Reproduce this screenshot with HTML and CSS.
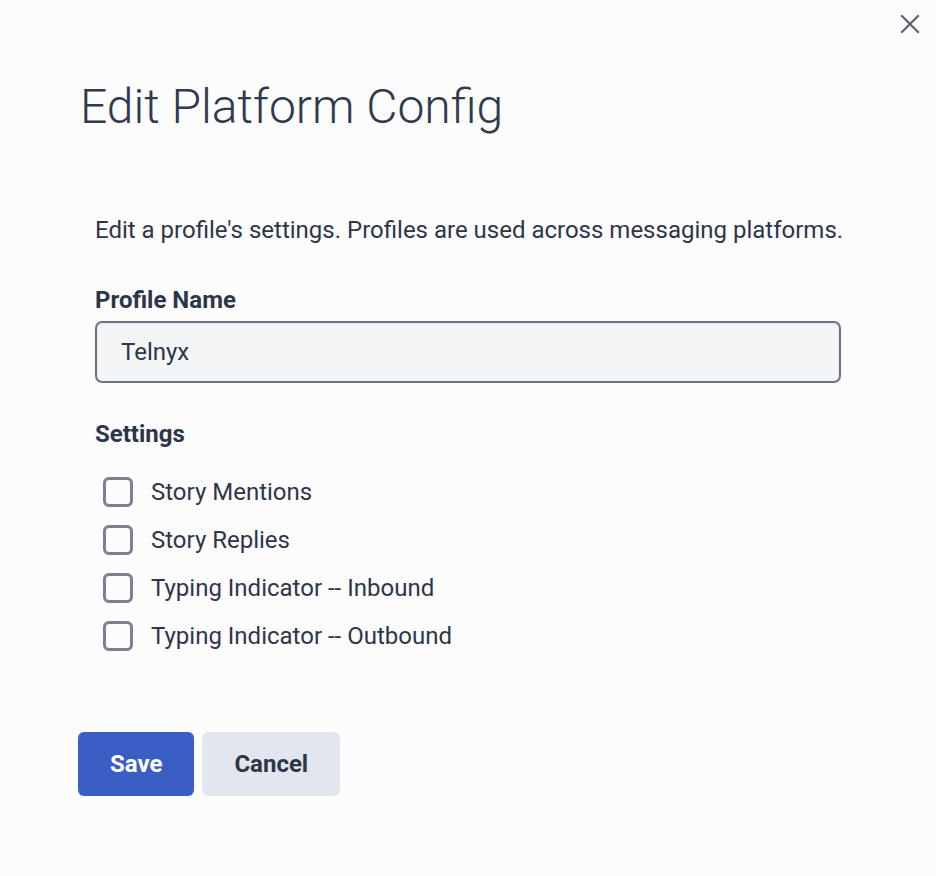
FILE: index.html
```html
<!DOCTYPE html>
<html lang="en">
<head>
<meta charset="utf-8">
<title>Edit Platform Config</title>
<link rel="stylesheet" href="styles.css">
</head>
<body>
<div class="dialog">
  <button class="close" aria-label="Close">
    <svg width="20" height="20" viewBox="0 0 20 20"><path d="M2 2 L18 18 M18 2 L2 18" stroke="#5b6374" stroke-width="2.2" stroke-linecap="square" fill="none"/></svg>
  </button>
  <h1 class="title">Edit Platform Config</h1>
  <div class="form">
    <p class="desc">Edit a profile's settings. Profiles are used across messaging platforms.</p>
    <label class="label" for="pname">Profile Name</label>
    <input class="input" id="pname" type="text" value="Telnyx">
    <div class="label settings">Settings</div>
    <ul class="checks">
      <li class="check"><span class="box"></span><span>Story Mentions</span></li>
      <li class="check"><span class="box"></span><span>Story Replies</span></li>
      <li class="check"><span class="box"></span><span>Typing Indicator -- Inbound</span></li>
      <li class="check"><span class="box"></span><span>Typing Indicator -- Outbound</span></li>
    </ul>
  </div>
  <div class="actions">
    <button class="btn primary">Save</button>
    <button class="btn secondary">Cancel</button>
  </div>
</div>
</body>
</html>
```
FILE: styles.css
```css
* { box-sizing: border-box; }
html, body { margin: 0; padding: 0; }
body {
  background: #fcfcfd;
  font-family: Roboto, "Liberation Sans", sans-serif;
  color: #2d3648;
  width: 936px;
  height: 876px;
  overflow: hidden;
}
.dialog {
  position: relative;
  height: 876px;
  padding: 79px 0 0 80px;
  display: flex;
  flex-direction: column;
  align-items: flex-start;
}
.close {
  position: absolute;
  top: 14px;
  right: 16px;
  width: 20px;
  height: 20px;
  padding: 0;
  border: 0;
  background: none;
  display: flex;
}
.title {
  margin: 0;
  font-size: 48px;
  line-height: 56px;
  font-weight: 300;
  color: #2f3a4c;
}
.form {
  margin: 81px 0 0 15px;
  width: 746px;
  display: flex;
  flex-direction: column;
}
.desc {
  margin: 0;
  font-size: 24px;
  line-height: 28px;
  white-space: nowrap;
}
.label {
  display: block;
  margin-top: 42px;
  font-size: 24px;
  line-height: 28px;
  font-weight: 700;
}
.input {
  margin-top: 7px;
  width: 746px;
  height: 62px;
  border: 2px solid #6b7284;
  border-radius: 7px;
  background: #f4f5f7;
  box-shadow: inset 0 1px 3px rgba(0,0,0,0.06);
  padding: 0 24px;
  font-family: inherit;
  font-size: 24px;
  color: #2d3648;
  outline: none;
}
.settings { margin-top: 37px; }
.checks {
  list-style: none;
  margin: 20px 0 0 0;
  padding: 0 0 0 8px;
}
.check {
  height: 48px;
  display: flex;
  align-items: center;
  gap: 18px;
  font-size: 24px;
}
.box {
  width: 30px;
  height: 30px;
  border: 3px solid #7b8190;
  border-radius: 6px;
  background: #fcfcfd;
  flex: none;
}
.actions {
  margin: 72px 0 0 -2px;
  display: flex;
  gap: 8px;
}
.btn {
  height: 64px;
  padding: 0 32px;
  border: 0;
  border-radius: 6px;
  font-family: inherit;
  font-size: 24px;
  font-weight: 700;
}
.primary { background: #3a5ec4; color: #fff; }
.secondary { background: #e3e6ee; color: #2d3648; }
```
